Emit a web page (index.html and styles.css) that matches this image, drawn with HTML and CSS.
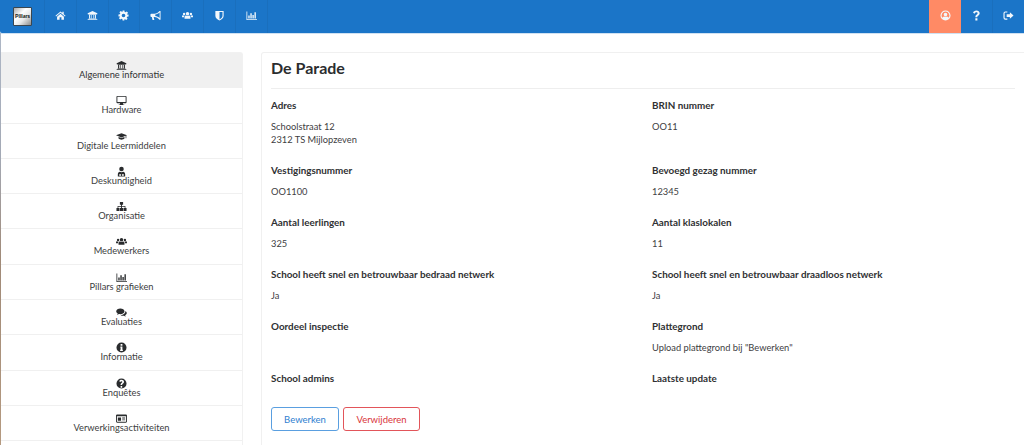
FILE: index.html
```html
<!DOCTYPE html>
<html lang="nl">
<head>
<meta charset="utf-8">
<title>De Parade</title>
<link rel="stylesheet" href="styles.css">
</head>
<body>
<svg class="defs" aria-hidden="true">
  <symbol id="i-home" viewBox="0 0 24 24"><path d="M12 3 1 12.6l1.3 1.5L12 5.800l9.700 8.300 1.300-1.500-4-3.400V4h-3v2.300zM4.500 14.600V21H10v-5h4v5h5.500v-6.400L12 8.200z"/></symbol>
  <symbol id="i-bank" viewBox="0 0 24 24"><path d="M12 2 1.500 7v2h21V7zM3.500 10v1h1v7h-1v1h17v-1h-1v-7h1v-1zM7 11h2.500v7H7zm3.800 0h2.400v7h-2.400zm3.700 0H17v7h-2.500zM1.500 20v2h21v-2z"/></symbol>
  <symbol id="i-cog" viewBox="0 0 24 24"><path fill-rule="evenodd" d="M10 1h4l.6 3.200 1.800.8 2.700-1.900 2.800 2.800-1.900 2.700.8 1.800L23 10v4l-3.200.6-.8 1.800 1.900 2.700-2.800 2.800-2.700-1.900-1.800.8L13.900 23H10l-.6-3.200-1.800-.8-2.700 1.900-2.800-2.800 1.900-2.700-.8-1.800L1 14v-4l3.200-.6.800-1.800-1.900-2.700 2.800-2.800 2.700 1.900 1.800-.8zM12 8a4 4 0 1 0 0 8 4 4 0 0 0 0-8z"/></symbol>
  <symbol id="i-bullhorn" viewBox="0 0 24 24"><path fill-rule="evenodd" d="M23 2h-2.200C18 5.500 14 7.500 9.500 8H3a2 2 0 0 0-2 2v3a2 2 0 0 0 2 2h1l1.500 7h4L8 15h1.500c4.500.5 8.500 2.500 11.300 6H23zM21 5.500v12c-2.500-2.500-6-4-9.500-4.500V10c3.500-.5 7-2 9.500-4.500z"/></symbol>
  <symbol id="i-users" viewBox="0 0 24 24"><circle cx="12" cy="8" r="3.800"/><path d="M5.500 19v-3c0-2.500 2-3.800 3.300-3.800 1 .7 2 1 3.200 1s2.200-.3 3.200-1c1.300 0 3.300 1.300 3.300 3.800v3z"/><circle cx="4.500" cy="8.500" r="2.600"/><circle cx="19.500" cy="8.500" r="2.600"/><path d="M0 16v-2c0-1.800 1.300-2.800 2.300-2.800.7.500 1.400.7 2.200.7s1 0 1.300-.1c-.8 1-1.300 2.300-1.300 4.200zm24 0v-2c0-1.800-1.300-2.800-2.300-2.800-.7.500-1.400.7-2.200.7s-1 0-1.300-.1c.8 1 1.300 2.300 1.300 4.200z"/></symbol>
  <symbol id="i-shield" viewBox="0 0 24 24"><path fill-rule="evenodd" d="M3 2h18v11c0 4.500-5 8-9 10-4-2-9-5.500-9-10zm9 2.500v16c3-1.700 6.500-4.300 6.500-7.500V4.500z"/></symbol>
  <symbol id="i-chart" viewBox="0 0 24 24"><path d="M1 3h1.800v17H24v1.800H1zM5 12h3v6.500H5zm4.500-5h3v11.500h-3zm4.500 4h3v7.500h-3zm4.500-6h3v13.500h-3z"/></symbol>
  <symbol id="i-user" viewBox="0 0 24 24"><path fill-rule="evenodd" d="M12 1a11 11 0 1 0 0 22 11 11 0 0 0 0-22zm0 2.500a8.500 8.500 0 0 1 6.800 13.600c-.7-1.700-2-2.800-3.600-3.100-1 .6-2 1-3.200 1s-2.200-.4-3.200-1c-1.600.3-2.900 1.400-3.600 3.100A8.500 8.500 0 0 1 12 3.500zM12 6a4 4 0 1 0 0 8 4 4 0 0 0 0-8z"/></symbol>
  <symbol id="i-question" viewBox="0 0 24 24"><path d="M12 1C8 1 5.500 3 4.500 6l3.500 2c.6-1.500 1.800-3 3.800-3 1.500 0 2.700.9 2.700 2.200 0 2.800-5 3-5 7.300V16h4.300v-1c0-2.700 5.200-3.200 5.200-7.900C19 3.500 15.500 1 12 1zM9.500 18h4.500v5H9.500z"/></symbol>
  <symbol id="i-signout" viewBox="0 0 24 24"><path d="M9.500 3H5a4 4 0 0 0-4 4v10a4 4 0 0 0 4 4h4.500v-2.500H5A1.500 1.500 0 0 1 3.500 17V7A1.500 1.500 0 0 1 5 5.500h4.500zM15 5v4H8v6h7v4l8-7z"/></symbol>
  <symbol id="i-desktop" viewBox="0 0 24 24"><path fill-rule="evenodd" d="M3 2h18a2 2 0 0 1 2 2v12a2 2 0 0 1-2 2h-6l.5 2.500H18V22H6v-1.500h2.500L9 18H3a2 2 0 0 1-2-2V4a2 2 0 0 1 2-2zm0 2v11.500h18V4z"/></symbol>
  <symbol id="i-grad" viewBox="0 0 24 24"><path d="M12 5 0 9.500 12 14l9-3.400V16h1.500V10L24 9.500zM5.500 13v3.500c1.500 1.500 4 2.500 6.500 2.500s5-1 6.500-2.500V13L12 15.500z"/></symbol>
  <symbol id="i-expert" viewBox="0 0 24 24"><circle cx="12" cy="6.500" r="5"/><path d="M4 23v-5c0-3 2-5 4.500-5.500 1 .6 2.200 1 3.500 1s2.500-.4 3.500-1C18 13 20 15 20 18v5z"/><path fill="#fff" d="M7 18h4v3.500H7zm6 0h4v3.500h-4z"/></symbol>
  <symbol id="i-org" viewBox="0 0 24 24"><path d="M8.500 2h7v6H13v3h7.500v4H23v7h-6.500v-7H19v-2.500h-6V15h2.500v7h-7v-7H11v-2.500H5V15h2.500v7H1v-7h2.500v-4H11V8H8.500z"/></symbol>
  <symbol id="i-chat" viewBox="0 0 24 24"><path d="M9.500 3C4.500 3 .5 5.700.5 9.300c0 2 1.300 3.800 3.300 5l-1.300 3 3.800-1.800c1 .2 2.100.3 3.200.3 5 0 9-2.800 9-6.500S14.500 3 9.500 3z"/><path d="M20.500 8.500c.3 4.500-4 8.700-10.500 8.800 1.300 1.300 3.300 2 5.500 2 .7 0 1.300 0 2-.2l3.500 2-1-3c2-1 3.500-2.700 3.500-4.800 0-2-1.200-3.700-3-4.800z"/></symbol>
  <symbol id="i-info" viewBox="0 0 24 24"><path fill-rule="evenodd" d="M12 1a11 11 0 1 0 0 22 11 11 0 0 0 0-22zM10 4.500h4V8h-4zM9.500 10H14v7h1v2.500H9V17h1v-4.500h-.5z"/></symbol>
  <symbol id="i-help" viewBox="0 0 24 24"><path fill-rule="evenodd" d="M12 1a11 11 0 1 0 0 22 11 11 0 0 0 0-22zm-2 16.500h3.500V21H10zM12 4c3 0 5.500 1.800 5.500 4.500 0 3-3.800 3.500-4 5.500v1.500H10V14c0-3 3.800-3.700 3.800-5.500 0-.9-.9-1.500-1.800-1.500-1.100 0-1.800.7-2.500 1.800L7 7C8.200 5 9.800 4 12 4z"/></symbol>
  <symbol id="i-card" viewBox="0 0 24 24"><path fill-rule="evenodd" d="M2.500 3h19A2.500 2.500 0 0 1 24 5.500v13a2.500 2.500 0 0 1-2.500 2.500h-19A2.500 2.500 0 0 1 0 18.500v-13A2.500 2.500 0 0 1 2.500 3zM2 7v11.500c0 .3.200.5.500.5h19c.3 0 .5-.2.500-.5V7zm2 3h7v7H4zm9.500 0H20v2h-6.500zm0 4H20v2h-6.500z"/></symbol>
</svg>

<nav class="topbar">
  <div class="tb-group">
    <a class="tb-logo"><span class="logo-box">Pillars</span></a>
    <a class="tb-item"><svg class="tb-icon"><use href="#i-home"/></svg></a>
    <a class="tb-item"><svg class="tb-icon"><use href="#i-bank"/></svg></a>
    <a class="tb-item"><svg class="tb-icon"><use href="#i-cog"/></svg></a>
    <a class="tb-item"><svg class="tb-icon"><use href="#i-bullhorn"/></svg></a>
    <a class="tb-item"><svg class="tb-icon"><use href="#i-users"/></svg></a>
    <a class="tb-item"><svg class="tb-icon"><use href="#i-shield"/></svg></a>
    <a class="tb-item"><svg class="tb-icon"><use href="#i-chart"/></svg></a>
  </div>
  <div class="tb-group">
    <a class="tb-item tb-orange"><svg class="tb-icon"><use href="#i-user"/></svg></a>
    <a class="tb-item"><svg class="tb-icon"><use href="#i-question"/></svg></a>
    <a class="tb-item tb-last"><svg class="tb-icon"><use href="#i-signout"/></svg></a>
  </div>
</nav>

<main class="page">
  <aside class="side">
    <a class="side-item active"><svg class="side-icon"><use href="#i-bank"/></svg><span>Algemene informatie</span></a>
    <a class="side-item"><svg class="side-icon"><use href="#i-desktop"/></svg><span>Hardware</span></a>
    <a class="side-item"><svg class="side-icon"><use href="#i-grad"/></svg><span>Digitale Leermiddelen</span></a>
    <a class="side-item"><svg class="side-icon"><use href="#i-expert"/></svg><span>Deskundigheid</span></a>
    <a class="side-item"><svg class="side-icon"><use href="#i-org"/></svg><span>Organisatie</span></a>
    <a class="side-item"><svg class="side-icon"><use href="#i-users"/></svg><span>Medewerkers</span></a>
    <a class="side-item"><svg class="side-icon"><use href="#i-chart"/></svg><span>Pillars grafieken</span></a>
    <a class="side-item"><svg class="side-icon"><use href="#i-chat"/></svg><span>Evaluaties</span></a>
    <a class="side-item"><svg class="side-icon"><use href="#i-info"/></svg><span>Informatie</span></a>
    <a class="side-item"><svg class="side-icon"><use href="#i-help"/></svg><span>Enquêtes</span></a>
    <a class="side-item"><svg class="side-icon"><use href="#i-card"/></svg><span>Verwerkingsactiviteiten</span></a>
  </aside>

  <section class="card">
    <h1 class="title">De Parade</h1>
    <div class="details">
      <div class="cell"><h2 class="label">Adres</h2><p class="value">Schoolstraat 12<br>2312 TS Mijlopzeven</p></div>
      <div class="cell"><h2 class="label">BRIN nummer</h2><p class="value">OO11</p></div>
      <div class="cell"><h2 class="label">Vestigingsnummer</h2><p class="value">OO1100</p></div>
      <div class="cell"><h2 class="label">Bevoegd gezag nummer</h2><p class="value">12345</p></div>
      <div class="cell"><h2 class="label">Aantal leerlingen</h2><p class="value">325</p></div>
      <div class="cell"><h2 class="label">Aantal klaslokalen</h2><p class="value">11</p></div>
      <div class="cell"><h2 class="label">School heeft snel en betrouwbaar bedraad netwerk</h2><p class="value">Ja</p></div>
      <div class="cell"><h2 class="label">School heeft snel en betrouwbaar draadloos netwerk</h2><p class="value">Ja</p></div>
      <div class="cell"><h2 class="label">Oordeel inspectie</h2><p class="value"></p></div>
      <div class="cell"><h2 class="label">Plattegrond</h2><p class="value">Upload plattegrond bij "Bewerken"</p></div>
      <div class="cell cell-end"><h2 class="label">School admins</h2></div>
      <div class="cell cell-end"><h2 class="label">Laatste update</h2></div>
    </div>
    <div class="actions">
      <button class="btn btn-blue">Bewerken</button>
      <button class="btn btn-red">Verwijderen</button>
    </div>
  </section>
</main>
</body>
</html>
```

FILE: styles.css
```css
* { box-sizing: border-box; }

html, body {
  margin: 0;
  height: 445px;
  overflow: hidden;
  background: #fff;
}

body {
  font-family: Lato, "Open Sans", sans-serif;
  color: #2f3133;
}

.defs {
  position: absolute;
  width: 0;
  height: 0;
}

.topbar {
  display: flex;
  justify-content: space-between;
  height: 33px;
  background: #1b75c8;
  box-shadow: 0 1px 0 #cfe1f2;
  border-bottom-left-radius: 2px;
}

.tb-group { display: flex; }

.tb-logo {
  width: 45px;
  display: flex;
  align-items: center;
  padding: 0 0 1px 13px;
  border-right: 1px solid #1a6fbd;
}

.logo-box {
  width: 19px;
  height: 19px;
  border: 1px solid #3a4650;
  border-radius: 1px;
  background: linear-gradient(135deg, #aaa 0%, #fff 38%, #e8e8e8 62%, #8c8c8c 100%);
  font-size: 5.500px;
  font-weight: 900;
  line-height: 16px;
  color: #222;
  text-align: center;
  overflow: hidden;
}

.tb-item {
  width: 31.800px;
  display: flex;
  align-items: center;
  justify-content: center;
  border-right: 1px solid #1a6fbd;
  padding-bottom: 3px;
}

.tb-last { border-right: 0; width: 31px; }

.tb-orange {
  background: #ff8a65;
  border-right: 0;
  width: 32px;
}

.tb-icon {
  width: 11px;
  height: 11px;
  fill: #f2f7fc;
}

.page {
  display: flex;
  gap: 18px;
  height: 412px;
  padding: 19px 0 0 1px;
  background: linear-gradient(to bottom, #aeb7c6 0, #a3a9b5 30%, #a08a78 55%, #b59a80 100%) 0 0 / 1px 100% no-repeat;
}

.side {
  flex: 0 0 242px;
  border: 1px solid #f1f1f1;
  border-width: 1px 1px 0 0;
  border-radius: 0 3px 0 0;
  background: #fff;
}

.side-item {
  display: flex;
  flex-direction: column;
  align-items: center;
  height: 35.300px;
  padding-top: 7px;
  border-bottom: 1px solid #f0f0f0;
  font-size: 9.300px;
  line-height: 13px;
  color: #3c3e40;
}

.side-item.active { background: #f0f0f0; color: #333; }

.side-icon {
  width: 11px;
  height: 11px;
  margin-bottom: -3px;
  fill: #2a2c2e;
  flex: none;
}

.card {
  flex: 0 0 780px;
  border: 1px solid #f0f0f0;
  border-bottom: 0;
  border-radius: 3px 0 0 0;
  padding: 0 0 0 9px;
}

.title {
  width: 744px;
  margin: 0;
  height: 36px;
  padding-top: 3px;
  border-bottom: 1px solid #eee;
  font-size: 16px;
  line-height: 24px;
  font-weight: 700;
  color: #2b2d2f;
}

.details {
  display: grid;
  grid-template-columns: 381px 1fr;
  padding-top: 9px;
}

.cell { padding-bottom: 17px; }
.cell-end { padding-bottom: 0; }

.label {
  margin: 0 0 8px;
  font-size: 9.850px;
  line-height: 14px;
  font-weight: 700;
  color: #2f3133;
}

.value {
  margin: 0;
  min-height: 13px;
  font-size: 9.300px;
  line-height: 13px;
  color: #3e4042;
}

.actions {
  display: flex;
  gap: 4px;
  margin-top: 14px;
}

.btn {
  height: 24px;
  background: #fff;
  border-radius: 3px;
  font-family: inherit;
  font-size: 9.500px;
  padding: 0;
}

.btn-blue {
  width: 68px;
  border: 1px solid #5a9fe0;
  color: #2f80d0;
}

.btn-red {
  width: 77px;
  border: 1px solid #e2555a;
  color: #d9343a;
}
```
